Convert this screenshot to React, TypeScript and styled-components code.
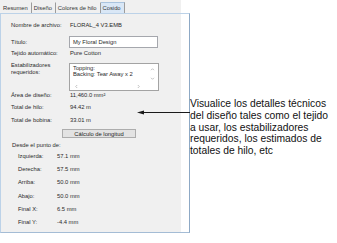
import React from 'react';
import styled, { createGlobalStyle } from 'styled-components';

const GlobalStyle = createGlobalStyle`
    html, body {
        margin: 0;
        padding: 0;
        background: #ffffff;
    }
    body {
        font-family: 'Liberation Sans', Arial, sans-serif;
    }
`;

const Page = styled.div`
    position: relative;
    display: flex;
    align-items: flex-start;
    width: 337px;
    height: 243px;
    overflow: hidden;
`;

const Panel = styled.div`
    width: 181px;
    height: 233px;
    display: flex;
    flex-direction: column;
    background: #f0f0f0;
    font-size: 5.8px;
    color: #2a2a2a;
    white-space: nowrap;
`;

const TabStrip = styled.div`
    height: 13px;
    display: flex;
    align-items: stretch;
    padding-left: 1px;
`;

const Tab = styled.div<{ $active?: boolean }>`
    display: flex;
    align-items: center;
    margin-top: 2px;
    padding: 0 3px 0 2px;
    border-right: 1px solid #9c9c9c;
    border-top: 1px solid ${props => props.$active ? '#a9c3de' : 'transparent'};
    background: ${props => props.$active ? '#d9e7f6' : 'transparent'};
    color: #333;
`;

const TabPage = styled.div`
    width: 178px;
    flex: 1;
    border: 1px solid #bcd2e8;
    border-right-color: #8ea9c5;
    border-bottom-color: #a4bcd5;
    padding-left: 10px;
    box-sizing: content-box;
`;

const Field = styled.div<{ $mt: number; $h: number }>`
    display: grid;
    grid-template-columns: 59px 1fr;
    align-items: center;
    height: ${props => props.$h}px;
    margin-top: ${props => props.$mt}px;
`;

const Label = styled.span`
    line-height: 7px;
`;

const StackLabel = styled.span`
    align-self: start;
    line-height: 6.5px;
    margin-top: -1px;
`;

const Value = styled.span`
    line-height: 7px;
`;

const TextInput = styled.div`
    width: 89px;
    height: 12px;
    margin-left: -1px;
    box-sizing: border-box;
    border: 1px solid #a5a7ad;
    background: #ffffff;
    padding-left: 3px;
    display: flex;
    align-items: center;
`;

const ListBox = styled.div`
    width: 90px;
    height: 28px;
    margin-left: -1px;
    box-sizing: border-box;
    border: 1px solid #a3a3a3;
    background: #ffffff;
    display: grid;
    grid-template-columns: 1fr 11px;
    grid-template-rows: 1fr 8px;
`;

const ListText = styled.div`
    padding: 1px 0 0 3px;
    line-height: 6px;
`;

const VScroll = styled.div`
    display: flex;
    flex-direction: column;
    align-items: center;
    justify-content: space-between;
    padding: 3px 0 1px;
`;

const HScroll = styled.div`
    display: flex;
    align-items: center;
    justify-content: space-between;
    padding: 0 6px 0 4px;
`;

const Chevron: React.FC<{ dir: 'up' | 'down' | 'left' | 'right' }> = ({ dir }) => {
    const rot = { up: 0, right: 90, down: 180, left: 270 }[dir];
    return (
        <svg width="5" height="5" viewBox="0 0 5 5">
            <path
                d="M1 3.2 L2.5 1.7 L4 3.2"
                fill="none"
                stroke="#b4b4b4"
                strokeWidth="0.8"
                transform={`rotate(${rot} 2.5 2.5)`}
            />
        </svg>
    );
};

const Button = styled.div`
    width: 74px;
    height: 9px;
    margin: 3px 0 0 51px;
    box-sizing: border-box;
    border: 1px solid #adadad;
    background: #e3e3e3;
    display: flex;
    align-items: center;
    justify-content: center;
    color: #222;
`;

const SectionTitle = styled.div`
    height: 10px;
    margin: 2px 0 0 1px;
    display: flex;
    align-items: center;
`;

const OffsetList = styled.div`
    display: grid;
    grid-template-columns: 39px 1fr;
    grid-auto-rows: 13.2px;
    align-items: center;
    padding-left: 7px;
`;

const Callout = styled.div`
    margin: 98px 0 0 9px;
    font-size: 10.3px;
    line-height: 11.75px;
    color: #111;
    white-space: nowrap;
`;

const Pointer = styled.svg`
    position: absolute;
    left: 137px;
    top: 109px;
`;

const offsets = [
    ['Izquierda:', '57.1 mm'],
    ['Derecha:', '57.5 mm'],
    ['Arriba:', '50.0 mm'],
    ['Abajo:', '50.0 mm'],
    ['Final X:', '6.5 mm'],
    ['Final Y:', '-4.4 mm'],
];

const App: React.FC = () => {
    return (
        <Page>
            <GlobalStyle />
            <Panel>
                <TabStrip>
                    <Tab>Resumen</Tab>
                    <Tab>Diseño</Tab>
                    <Tab>Colores de hilo</Tab>
                    <Tab $active>Cosido</Tab>
                </TabStrip>
                <TabPage>
                    <Field $mt={5} $h={12}>
                        <Label>Nombre de archivo:</Label>
                        <Value>FLORAL_4 V3.EMB</Value>
                    </Field>
                    <Field $mt={5} $h={12}>
                        <Label>Título:</Label>
                        <TextInput>My Floral Design</TextInput>
                    </Field>
                    <Field $mt={0} $h={11}>
                        <Label>Tejido automático:</Label>
                        <Value>Pure Cotton</Value>
                    </Field>
                    <Field $mt={4} $h={28}>
                        <StackLabel>
                            Estabilizadores
                            <br />
                            requeridos:
                        </StackLabel>
                        <ListBox>
                            <ListText>
                                Topping:
                                <br />
                                Backing: Tear Away x 2
                            </ListText>
                            <VScroll>
                                <Chevron dir="up" />
                                <Chevron dir="down" />
                            </VScroll>
                            <HScroll>
                                <Chevron dir="left" />
                                <Chevron dir="right" />
                            </HScroll>
                        </ListBox>
                    </Field>
                    <Field $mt={0} $h={9}>
                        <Label>Área de diseño:</Label>
                        <Value>11,460.0 mm²</Value>
                    </Field>
                    <Field $mt={1} $h={12}>
                        <Label>Total de hilo:</Label>
                        <Value>94.42 m</Value>
                    </Field>
                    <Field $mt={1} $h={12}>
                        <Label>Total de bobina:</Label>
                        <Value>33.01 m</Value>
                    </Field>
                    <Button>Cálculo de longitud</Button>
                    <SectionTitle>Desde el punto de:</SectionTitle>
                    <OffsetList>
                        {offsets.map(([label, value]) => (
                            <React.Fragment key={label}>
                                <Label>{label}</Label>
                                <Value>{value}</Value>
                            </React.Fragment>
                        ))}
                    </OffsetList>
                </TabPage>
            </Panel>
            <Callout>
                Visualice los detalles técnicos
                <br />
                del diseño tales como el tejido
                <br />
                a usar, los estabilizadores
                <br />
                requeridos, los estimados de
                <br />
                totales de hilo, etc
            </Callout>
            <Pointer width="53" height="7" viewBox="0 0 53 7">
                <line x1="5" y1="3.5" x2="53" y2="3.5" stroke="#1a1a1a" strokeWidth="1" />
                <polygon points="0,3.5 7,1.5 7,5.5" fill="#1a1a1a" />
            </Pointer>
        </Page>
    );
};

export default App;
